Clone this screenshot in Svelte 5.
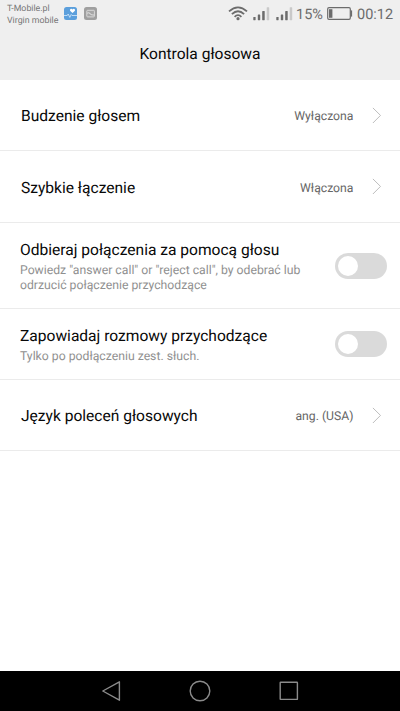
<script>
  const rows = [
    { title: 'Budzenie głosem', value: 'Wyłączona', height: 71 },
    { title: 'Szybkie łączenie', value: 'Włączona', height: 72 },
    {
      title: 'Odbieraj połączenia za pomocą głosu',
      lines: ['Powiedz "answer call" or "reject call", by odebrać lub', 'odrzucić połączenie przychodzące'],
      height: 86
    },
    { title: 'Zapowiadaj rozmowy przychodzące', lines: ['Tylko po podłączeniu zest. słuch.'], height: 71 },
    { title: 'Język poleceń głosowych', value: 'ang. (USA)', height: 71 }
  ];
</script>

{#snippet signal()}
  <svg class="signal" width="17" height="14" viewBox="0 0 17 14">
    <g fill="#6c6c6c">
      <rect x="0.3" y="10" width="2.3" height="3.2" rx=".4" />
      <rect x="4.8" y="7.5" width="2.4" height="5.7" rx=".4" />
      <rect x="9.2" y="4" width="2.5" height="9.2" rx=".4" />
    </g>
    <rect x="13.7" y="0.3" width="2.5" height="12.9" rx=".4" fill="#c9c9c9" />
  </svg>
{/snippet}

<div class="screen">
  <header>
    <div class="status">
      <div class="carrier"><span>T-Mobile.pl</span><span>Virgin mobile</span></div>
      <svg class="health" width="13" height="13" viewBox="0 0 13 13">
        <rect width="13" height="13" rx="2.5" fill="#5b9fdc" />
        <path d="M8.5 6 6.3 4C5.2 2.7 7 .9 8.5 2.4 10 .9 11.8 2.7 10.7 4Z" fill="#fff" />
        <path d="M0 8.5H3.2L4.2 7 5.8 10.4 7.2 7.5 8 8.5H13" fill="none" stroke="#d8ebfb" stroke-width=".8" />
      </svg>
      <svg class="photo" width="13" height="13" viewBox="0 0 13 13">
        <rect width="13" height="13" rx="2.5" fill="#9f9f9f" />
        <rect x="2.8" y="3.3" width="7.6" height="6.6" rx=".8" fill="#a6a6a6" stroke="#dedede" stroke-width=".9" />
        <path d="M3 5.8Q5 4.7 6.3 6.3T10.2 7.4V8.4Q7.5 8.8 6 7.2T3 6.8Z" fill="#dedede" />
      </svg>
      <div class="spacer"></div>
      <svg class="wifi" width="20" height="15" viewBox="0 0 20 15">
        <g fill="none" stroke="#6c6c6c" stroke-width="1.8">
          <path d="M1 5.4Q10-2.6 19 5.4" />
          <path d="M3.9 8.2Q10 2.4 16.1 8.2" />
          <path d="M6.6 10.8Q10 7.4 13.4 10.8" />
        </g>
        <circle cx="10" cy="12.7" r="1.6" fill="#6c6c6c" />
      </svg>
      {@render signal()}
      {@render signal()}
      <span class="percent">15%</span>
      <svg class="battery" width="26" height="13" viewBox="0 0 26 13">
        <rect x=".7" y=".7" width="22.6" height="11.6" rx="1.3" fill="none" stroke="#6c6c6c" stroke-width="1.2" />
        <rect x="2" y="2.2" width="3.4" height="8.6" fill="#6c6c6c" />
        <path d="M24.3 3.4V9.6" stroke="#6c6c6c" stroke-width="1.6" />
      </svg>
      <span class="time">00:12</span>
    </div>
    <h1>Kontrola głosowa</h1>
  </header>

  <main>
    {#each rows as row}
      <section class:toggle={row.lines} style:height="{row.height}px">
        <div class="text">
          <h2>{row.title}</h2>
          {#if row.lines}
            <p>{#each row.lines as line}<span>{line}</span>{/each}</p>
          {/if}
        </div>
        {#if row.value}
          <span class="value">{row.value}</span>
          <svg class="chevron" width="10" height="17" viewBox="0 0 10 17">
            <path d="M.9.9 8.5 8.4.9 16" fill="none" stroke="#bdbdbd" stroke-width="1" />
          </svg>
        {:else}
          <div class="switch"><i></i></div>
        {/if}
      </section>
    {/each}
  </main>

  <nav>
    <svg width="20" height="22" viewBox="0 0 20 22">
      <path d="M18.4 1.8V20.2L1.8 11Z" />
    </svg>
    <svg width="22" height="22" viewBox="0 0 22 22">
      <circle cx="11" cy="11" r="9.8" />
    </svg>
    <svg width="20" height="20" viewBox="0 0 20 20">
      <rect x="1.2" y="1.2" width="17.2" height="17.2" rx=".5" />
    </svg>
  </nav>
</div>

<style>
  .screen {
    width: 400px;
    height: 711px;
    display: flex;
    flex-direction: column;
    background: #fff;
    font-family: Roboto, sans-serif;
    text-rendering: geometricPrecision;
    overflow: hidden;
  }
  header {
    height: 80px;
    flex: none;
    background: #efefef;
  }
  .status {
    height: 27px;
    display: flex;
    align-items: center;
    padding: 0 7px;
    color: #6c6c6c;
    white-space: nowrap;
  }
  .spacer { flex: 1; }
  .carrier {
    width: 57px;
    display: flex;
    flex-direction: column;
    padding-top: 2px;
    font-size: 8.8px;
    line-height: 12px;
    color: #777;
  }
  svg { flex: none; display: block; }
  .photo { margin-left: 7px; }
  .wifi { margin-right: 5px; }
  .signal { margin-right: 6px; }
  .percent, .time { font-size: 14.5px; line-height: 27px; padding-top: 1px; }
  .percent { width: 31px; margin-left: -3px; }
  .time { width: 36px; margin-left: 4px; }
  h1 {
    margin: 15px 0 0;
    text-align: center;
    font-size: 15.55px;
    line-height: 25px;
    font-weight: 400;
    color: #080808;
  }
  main { flex: 1; }
  section {
    box-sizing: border-box;
    display: flex;
    align-items: center;
    padding: 0 18px 0 21px;
    border-bottom: 1px solid #ebebeb;
    white-space: nowrap;
  }
  section.toggle { padding: 0 13px 0 20px; }
  .text { flex: 1; padding-top: 2px; }
  h2 {
    margin: 0;
    font-size: 15.57px;
    line-height: 20px;
    font-weight: 400;
    color: #080808;
  }
  p {
    margin: 3px 0 0;
    font-size: 12.22px;
    line-height: 15px;
    color: #909090;
  }
  p span { display: block; }
  .value {
    font-size: 12.2px;
    line-height: 15px;
    padding-top: 3px;
    color: #666;
    margin-right: 18.6px;
  }
  .switch {
    box-sizing: border-box;
    width: 52px;
    height: 26px;
    padding: 3px;
    border-radius: 13px;
    background: #dadada;
  }
  .switch i {
    display: block;
    width: 20px;
    height: 20px;
    border-radius: 50%;
    background: #fff;
  }
  nav {
    height: 40px;
    flex: none;
    display: flex;
    align-items: center;
    justify-content: center;
    gap: 68px;
    background: #000;
  }
  nav svg { fill: none; stroke: #8b8b8b; stroke-width: 1.4; stroke-linejoin: round; }
</style>
